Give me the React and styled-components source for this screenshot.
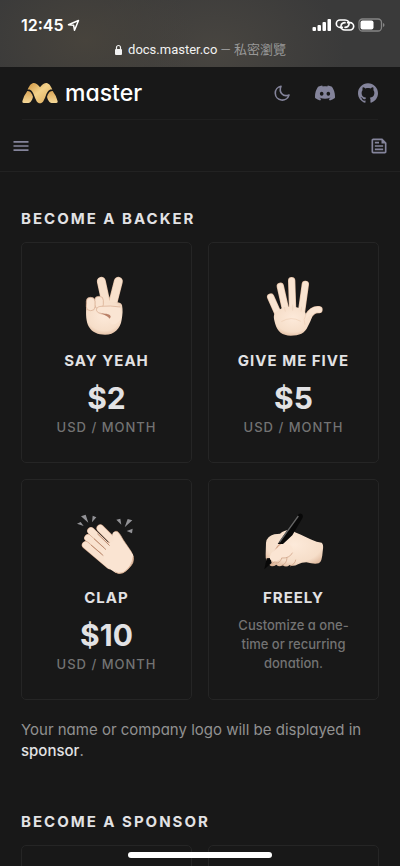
import React from "react";
import styled, { createGlobalStyle } from "styled-components";
import { SiDiscord, SiGithub } from "react-icons/si";
import { MdMenu, MdOutlineFeed } from "react-icons/md";

const GlobalStyle = createGlobalStyle`
  *, *::before, *::after { box-sizing: border-box; }
  body {
    margin: 0;
    background: #181818;
    color: #e2e2e4;
    font-family: Inter, "Noto Sans CJK TC", sans-serif;
    font-feature-settings: "cv11";
    -webkit-font-smoothing: antialiased;
  }
`;

const Page = styled.div`
  display: flex;
  flex-direction: column;
  height: 100vh;
`;

const BrowserBar = styled.div`
  flex: none;
  height: 67px;
  padding-top: 14px;
  background:
    radial-gradient(ellipse 110px 80px at 85px 40px, #47433c, transparent),
    radial-gradient(ellipse 130px 90px at 215px 50px, #484540, transparent),
    #3a3a3a;
`;

const StatusRow = styled.div`
  display: flex;
  align-items: center;
  justify-content: space-between;
  height: 22px;
  padding: 0 15px 0 21px;
  color: #fff;
`;

const StatusGroup = styled.div`
  display: flex;
  align-items: center;
  gap: 3px;
`;

const Time = styled.time`
  font-size: 16px;
  font-weight: 600;
  line-height: 22px;
`;

const Address = styled.div`
  display: flex;
  align-items: center;
  justify-content: center;
  gap: 5px;
  height: 28px;
  color: #f2f2f2;
  font-family: Roboto, "Noto Sans CJK TC", sans-serif;
  font-size: 13px;
  line-height: 28px;
`;

const Muted = styled.span`
  color: #989898;
`;

const Header = styled.header`
  flex: none;
  border-bottom: 1px solid #222;
`;

const BrandRow = styled.div`
  display: flex;
  align-items: center;
  justify-content: space-between;
  height: 53px;
  margin: 0 22px;
  padding-bottom: 1px;
  border-bottom: 1px solid #202020;
`;

const Brand = styled.a`
  display: flex;
  align-items: center;
  gap: 7px;
  color: #fff;
  font-size: 23px;
  font-weight: 500;
  line-height: 28px;
  text-decoration: none;
`;

const IconNav = styled.nav`
  display: flex;
  align-items: center;
  gap: 23px;
`;

const iconStyle = `
  display: flex;
  padding: 0;
  border: 0;
  background: none;
  color: #84849b;
`;

const IconButton = styled.button`
  ${iconStyle}
  cursor: pointer;
`;

const IconLink = styled.a`
  ${iconStyle}
`;

const ToolRow = styled.div`
  display: flex;
  align-items: center;
  justify-content: space-between;
  height: 51px;
  padding: 0 11px;
`;

const Main = styled.main`
  flex: 1;
  min-height: 0;
  overflow-y: auto;
  scrollbar-width: none;
  padding: 36px 21px;
`;

const Section = styled.section`
  margin-bottom: 50px;
`;

const SectionTitle = styled.h2`
  margin: 0 0 13px;
  font-size: 15px;
  font-weight: 700;
  line-height: 21px;
  letter-spacing: 2px;
  text-transform: uppercase;
`;

const CardGrid = styled.div`
  display: grid;
  grid-template-columns: 1fr 1fr;
  gap: 16px;
`;

const Card = styled.a`
  display: flex;
  flex-direction: column;
  align-items: center;
  min-height: 221px;
  padding: 32px 24px 24px;
  border: 1px solid #252525;
  border-radius: 5px;
  color: inherit;
  text-align: center;
  text-decoration: none;
`;

const CardTitle = styled.h3`
  margin: 13px 0 0;
  font-size: 15px;
  font-weight: 700;
  line-height: 22px;
  letter-spacing: 1px;
  text-transform: uppercase;
`;

const Price = styled.div`
  margin-top: 8px;
  font-size: 30px;
  font-weight: 700;
  line-height: 36px;
`;

const Period = styled.div`
  margin-top: 1px;
  color: #737373;
  font-size: 13px;
  font-weight: 500;
  line-height: 20px;
  letter-spacing: 1px;
`;

const Description = styled.p`
  margin: 7px 0 0;
  color: #737373;
  font-size: 13px;
  font-weight: 500;
  line-height: 19px;
`;

const Note = styled.p`
  margin: 19px 0 0;
  color: #919191;
  font-size: 15px;
  line-height: 21px;
`;

const NoteLink = styled.a`
  color: #e2e2e4;
  font-weight: 500;
  text-decoration: none;
`;

const HomeIndicator = styled.div`
  position: fixed;
  bottom: 8px;
  left: 50%;
  width: 144px;
  height: 6px;
  margin-left: -72px;
  border-radius: 3px;
  background: #fff;
`;

const LocationIcon = () => (
  <svg width="13" height="13" viewBox="0 0 13 13" fill="none" stroke="currentColor" strokeWidth="1.5" strokeLinejoin="round" aria-hidden="true">
    <path d="M1.500 5.700 11.500 1.500 7.500 11.300 6.600 6.200Z" />
  </svg>
);

const SignalIcon = () => (
  <svg width="20" height="14" viewBox="0 0 20 14" fill="currentColor" aria-label="Signal">
    <rect x="0.5" y="9" width="3.500" height="4" rx="1" />
    <rect x="5.5" y="7" width="3.500" height="6" rx="1" />
    <rect x="10.5" y="4" width="3.500" height="9" rx="1" />
    <rect x="15.5" y="1" width="3.500" height="12" rx="1" />
  </svg>
);

const HotspotIcon = () => (
  <svg width="20" height="14" viewBox="0 0 60 42" fill="none" stroke="currentColor" strokeWidth="5" strokeLinecap="round" aria-label="Hotspot">
    <path d="M22 28h-7a11 11 0 0 1 0-22h15c8 0 14 6 12 13-1 5-6 9-12 9" />
    <path d="M38 14h7a11 11 0 0 1 0 22H30c-8 0-14-6-12-13 1-5 6-9 12-9" />
  </svg>
);

const BatteryIcon = () => (
  <svg width="27" height="14" viewBox="0 0 27 14" aria-label="Battery">
    <rect x="1" y="1" width="22.5" height="12" rx="3.5" fill="none" stroke="#858585" strokeWidth="1.3" />
    <rect x="2.5" y="2.5" width="13" height="9" rx="2" fill="#fff" />
    <path d="M25 5v4q1.5-.6 1.5-2T25 5Z" fill="#858585" />
  </svg>
);

const LockIcon = () => (
  <svg width="9" height="12" viewBox="0 0 9 12" aria-hidden="true">
    <rect x="1" y="5" width="7" height="6" rx="1" fill="currentColor" />
    <path d="M2.500 5.500V3.500a2 2 0 0 1 4 0v2" fill="none" stroke="currentColor" strokeWidth="1.200" />
  </svg>
);

const MoonIcon = () => (
  <svg width="20" height="20" viewBox="0 0 20 20" fill="none" stroke="currentColor" strokeWidth="1.600" strokeLinejoin="round" aria-hidden="true">
    <path d="M9 3.200A7 7 0 1 0 17 12C11 14.500 6.500 9 9 3.200Z" />
  </svg>
);

const LogoMark = () => (
  <svg width="36" height="22" viewBox="12 18 108 66" aria-hidden="true">
    <defs>
      <linearGradient id="gold" x1="0" y1="0" x2="1" y2="1">
        <stop offset="0" stopColor="#cf9440" />
        <stop offset=".45" stopColor="#f3d28b" />
        <stop offset="1" stopColor="#d9a655" />
      </linearGradient>
      <linearGradient id="gold-foot" x1="0" y1="0" x2="0" y2="1">
        <stop offset="0" stopColor="#d9a557" />
        <stop offset="1" stopColor="#f5d898" />
      </linearGradient>
    </defs>
    <path d="M29 41C35 27 40 21 48 21c8 0 13 7 18 13 5-6 10-13 18-13s13 6 19 20c-10-2-15 6-20 19-5 14-9 22-17 22s-12-8-17-22C44 47 39 39 29 41Z" fill="url(#gold)" />
    <path d="M28 45c9-1 14 8 17 17-3 12-8 19-17 19H17q-5 0-4-5 4-17 15-31Z" fill="url(#gold-foot)" />
    <path d="M104 45c-9-1-14 8-17 17 3 12 8 19 17 19h11q5 0 4-5-4-17-15-31Z" fill="url(#gold-foot)" />
  </svg>
);

const SkinDefs = ({ id }) => (
  <defs>
    <radialGradient id={id} cx=".5" cy=".4" r=".68">
      <stop offset="0" stopColor="#fdeada" />
      <stop offset=".7" stopColor="#f6dec9" />
      <stop offset="1" stopColor="#dcb497" />
    </radialGradient>
  </defs>
);

const VictoryHand = () => (
  <svg width="70" height="62" viewBox="6 30 210 186" role="img" aria-label="Victory hand">
    <SkinDefs id="victory" />
    <g strokeLinecap="round" fill="none">
      <path d="M94 49l17 78M145 49l-20 78" stroke="#dfbda3" strokeWidth="27" />
      <path d="M94 49l17 80M145 49l-20 80" stroke="#f8e1cc" strokeWidth="23" />
    </g>
    <path d="M49 122c-2 25-1 49 8 64 9 16 27 23 48 23 29 0 46-19 50-45 3-16 4-28 1-44-3-7-10-8-20-8H64q-15 0-15 10Z" fill="url(#victory)" />
    <rect x="74" y="94" width="26" height="37" rx="12" fill="#f9e3d0" stroke="#d3a68a" strokeWidth="2" />
    <rect x="49" y="97" width="26" height="40" rx="12" fill="#f9e3d0" stroke="#d3a68a" strokeWidth="2" />
    <path d="M151 126q-31-5-58-2c-11 1-15 7-13 13 3 9 18 10 29 14q7 4 8 16 12 24 36-4Z" fill="#fae5d3" />
    <path d="M151 126q-31-5-58-2c-11 1-15 7-13 13 3 9 18 10 29 13" fill="none" stroke="#d3a68a" strokeWidth="2" />
    <path d="M86 141c12 7 27 3 34 10q5 6-2 10c-4-10-19-11-32-20Z" fill="#b98067" />
  </svg>
);

const RaisedHand = () => (
  <svg width="70" height="62" viewBox="10 30 210 186" role="img" aria-label="Raised hand">
    <SkinDefs id="raised" />
    <g strokeLinecap="round" fill="none">
      <path d="M45 96l27 61M74 64l18 80M108 47l3 92M149 58l-12 86M190 134q-20-2-32 20l-18 25" stroke="#e0bea4" strokeWidth="22" />
      <path d="M45 96l27 61M74 64l18 80M108 47l3 92M149 58l-12 86M190 134q-20-2-32 20l-18 25" stroke="#f9e4d1" strokeWidth="18" />
    </g>
    <path d="M60 142q18-18 42-17 29-2 48 19-1 11 2 16l18-13c-1 15-8 26-14 38-8 19-25 27-51 27-25 0-40-12-46-34-4-16-8-26 1-36Z" fill="url(#raised)" />
    <path d="m86 126 3 14M111 119v18M138 125l-2 15" stroke="#e9cbb3" strokeWidth="1.500" />
    <path d="M151 149q-10 14-3 30M77 170q30-18 58-1" fill="none" stroke="#e4bea0" strokeWidth="2" opacity=".6" />
  </svg>
);

const ClappingHands = () => (
  <svg width="70" height="62" viewBox="6 21 210 186" role="img" aria-label="Clapping hands">
    <SkinDefs id="clap" />
    <g fill="#929296" strokeLinejoin="round">
      <path d="m33 34 14-5 8 24ZM21 56l11-5 9 12ZM68 32l11 5-13 15ZM139 44l12-3 3 18ZM173 42l14 4-23 21ZM188 71l-2 14-16-7Z" />
    </g>
    <path d="M119 106q-2-16 10-16 3-15 14-10 7 6 17 25l23 34q16 25-1 45-24 30-46 18L92 158Z" fill="url(#clap)" stroke="#d4a98b" strokeWidth="2" />
    <g strokeLinecap="round" fill="none">
      <path d="m91 70 54 54M63 78l62 60" stroke="#d0a58a" strokeWidth="23" />
      <path d="m91 70 54 54M63 78l62 60" stroke="#f9e2cf" strokeWidth="20" />
      <path d="m54 99 62 56" stroke="#d0a58a" strokeWidth="23" />
      <path d="m54 99 62 56" stroke="#f9e2cf" strokeWidth="20" />
      <path d="m47 120 72 61" stroke="#d0a58a" strokeWidth="23" />
      <path d="m47 120 72 61" stroke="#f9e2cf" strokeWidth="20" />
    </g>
    <path d="M90 136 132 104q-11-21 2-24 9 3 12 15 7 14 23 26l20 28q3 30-26 52c-19 10-36-2-51-16Z" fill="#fae4d2" />
    <path d="m64 121 35 30M73 102l34 31M83 87l35 34" stroke="#bc8b70" strokeWidth="3" strokeLinecap="round" />
    <path d="M190 153q-4 34-31 50-15 5-25-3" fill="none" stroke="#d4a98b" strokeWidth="2" />
  </svg>
);

const WritingHand = () => (
  <svg width="70" height="62" viewBox="10 21 210 186" role="img" aria-label="Writing hand">
    <SkinDefs id="writing" />
    <path d="M45 183Q28 170 30 148L31 113q3-20 25-25l17-2c14-12 35-15 45-4 22 7 42 22 65 28l15 3q7 5 3 27-2 32-12 35-14 3-37-3-14 0-25 6-14 8-25 2-10 9-21 1-11 7-19-2-8 6-17 4Z" fill="url(#writing)" />
    <path d="M49 152 66 124 87 105" stroke="#d4a589" strokeWidth="4" fill="none" />
    <path d="M126 31q5-8 12-4 6 4 2 13L110 91 82 117H66Z" fill="#080808" />
    <path d="m128 33-57 79" stroke="#666" strokeWidth="4" />
    <path d="m33 160-7 33 22-19-4-15Z" fill="#080808" />
    <path d="M43 163q-4-13 13-27 12-13 31-17 17-2 24 10 9 13-7 22-13 9-26 8-10 8-22 12Z" fill="#fbe5d3" />
    <path d="M79 159q22 2 31-15M60 174q13 2 18-14M79 181q14-4 15-22M104 183q14-5 16-18M58 170l-8 5" fill="none" stroke="#c99a7d" strokeWidth="2" strokeLinecap="round" />
  </svg>
);

const tiers = [
  { title: "Say yeah", price: "$2", Icon: VictoryHand },
  { title: "Give me five", price: "$5", Icon: RaisedHand },
  { title: "Clap", price: "$10", Icon: ClappingHands },
  { title: "Freely", description: "Customize a one-time or recurring donation.", Icon: WritingHand },
];

export default function App() {
  return (
    <>
      <GlobalStyle />
      <Page>
        <BrowserBar>
          <StatusRow>
            <StatusGroup>
              <Time>12:45</Time>
              <LocationIcon />
            </StatusGroup>
            <StatusGroup>
              <SignalIcon />
              <HotspotIcon />
              <BatteryIcon />
            </StatusGroup>
          </StatusRow>
          <Address>
            <LockIcon />
            <span>docs.master.co <Muted>— 私密瀏覽</Muted></span>
          </Address>
        </BrowserBar>
        <Header>
          <BrandRow>
            <Brand href="#">
              <LogoMark />
              master
            </Brand>
            <IconNav aria-label="Links">
              <IconButton type="button" aria-label="Toggle theme"><MoonIcon /></IconButton>
              <IconLink href="#" aria-label="Discord"><SiDiscord size={20} /></IconLink>
              <IconLink href="#" aria-label="GitHub"><SiGithub size={20} /></IconLink>
            </IconNav>
          </BrandRow>
          <ToolRow>
            <IconButton type="button" aria-label="Menu"><MdMenu size={20} /></IconButton>
            <IconButton type="button" aria-label="On this page"><MdOutlineFeed size={20} /></IconButton>
          </ToolRow>
        </Header>
        <Main>
          <Section>
            <SectionTitle>Become a backer</SectionTitle>
            <CardGrid>
              {tiers.map(({ title, price, description, Icon }) => (
                <Card key={title} href="#">
                  <Icon />
                  <CardTitle>{title}</CardTitle>
                  {price && <Price>{price}</Price>}
                  {price && <Period>USD / MONTH</Period>}
                  {description && <Description>{description}</Description>}
                </Card>
              ))}
            </CardGrid>
            <Note>
              Your name or company logo will be displayed in <NoteLink href="#">sponsor</NoteLink>.
            </Note>
          </Section>
          <Section>
            <SectionTitle>Become a sponsor</SectionTitle>
            <CardGrid>
              <Card as="div" />
              <Card as="div" />
            </CardGrid>
          </Section>
        </Main>
      </Page>
      <HomeIndicator />
    </>
  );
}
